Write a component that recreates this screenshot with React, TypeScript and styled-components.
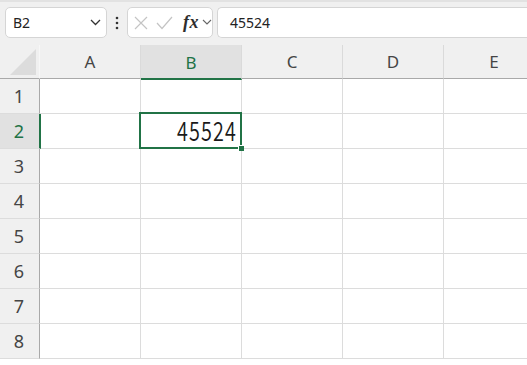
import React from "react";
import styled, { createGlobalStyle } from "styled-components";

const Global = createGlobalStyle`
  html, body { margin: 0; padding: 0; background: #ffffff; overflow: hidden; }
  body { width: 527px; height: 365px; font-family: "Noto Sans", "Open Sans", sans-serif; }
`;

const GREEN = "#217346";

const Page = styled.div`
  width: 527px;
  height: 365px;
  overflow: hidden;
  display: flex;
  flex-direction: column;
`;

const Toolbar = styled.div`
  flex: none;
  height: 45px;
  box-sizing: border-box;
  background: #f0f0f0;
  border-top: 2px solid #e2e2e2;
  display: flex;
  align-items: flex-start;
  padding: 5px 0 0 5px;
  white-space: nowrap;
  overflow: hidden;
`;

const Box = styled.div<{ $w?: number }>`
  box-sizing: border-box;
  height: 31px;
  width: ${(p) => p.$w ?? 330}px;
  flex: none;
  background: #ffffff;
  border: 1px solid #d5d5d5;
  border-radius: 5px;
  display: flex;
  align-items: center;
`;

const NameBox = styled(Box)`
  padding: 0 5px 0 7px;
  justify-content: space-between;
  font-size: 14px;
  color: #222;
`;

const FormulaInput = styled(Box)`
  padding-left: 12px;
  font-size: 14px;
  color: #222;
  border-right: none;
  border-radius: 5px 0 0 5px;
`;

const Dots = styled.div`
  flex: none;
  width: 20px;
  height: 31px;
  display: flex;
  align-items: center;
  justify-content: center;
`;

const FxGroup = styled(Box)`
  padding-left: 6px;
  margin-right: 4px;
`;

const Fx = styled.span`
  font-family: "Liberation Serif", serif;
  font-style: italic;
  font-weight: 600;
  font-size: 18px;
  color: #2e2e2e;
  margin-left: 10px;
  letter-spacing: 0.5px;
`;

const Sheet = styled.div`
  flex: 1;
  display: grid;
  grid-template-columns: 40px repeat(5, 101px);
  grid-template-rows: 34px repeat(8, 35px);
  background: #ffffff;
`;

const Corner = styled.div`
  background: #f0f0f0;
  border-right: 1px solid #f7f7f7;
  border-bottom: 1px solid #a9a9a9;
  box-sizing: border-box;
  position: relative;
  &::after {
    content: "";
    position: absolute;
    left: 10px;
    top: 4px;
    width: 26px;
    height: 26px;
    background: #dcdcdc;
    clip-path: polygon(100% 0, 100% 100%, 0 100%);
  }
`;

const ColHead = styled.div<{ $sel?: boolean }>`
  box-sizing: border-box;
  background: ${(p) => (p.$sel ? "#e1e1e1" : "#f0f0f0")};
  border-right: 1px solid #dadada;
  border-bottom: ${(p) => (p.$sel ? `2px solid ${GREEN}` : "1px solid #a9a9a9")};
  margin-bottom: ${(p) => (p.$sel ? "-1px" : "0")};
  display: flex;
  align-items: center;
  justify-content: center;
  padding-top: ${(p) => (p.$sel ? "1px" : "0")};
  font-size: 17px;
  color: ${(p) => (p.$sel ? GREEN : "#454545")};
  position: relative;
  z-index: 1;
`;

const RowHead = styled.div<{ $sel?: boolean }>`
  box-sizing: border-box;
  background: ${(p) => (p.$sel ? "#e1e1e1" : "#f0f0f0")};
  border-right: ${(p) => (p.$sel ? `2px solid ${GREEN}` : "1px solid #a9a9a9")};
  margin-right: ${(p) => (p.$sel ? "-1px" : "0")};
  border-bottom: 1px solid #dcdcdc;
  display: flex;
  align-items: center;
  justify-content: center;
  padding-right: 1px;
  font-size: 18px;
  color: ${(p) => (p.$sel ? GREEN : "#454545")};
  position: relative;
  z-index: 1;
`;

const Cell = styled.div<{ $active?: boolean }>`
  box-sizing: border-box;
  border-right: 1px solid #dcdcdc;
  border-bottom: 1px solid #dcdcdc;
  position: relative;
  display: flex;
  align-items: flex-end;
  justify-content: flex-end;
  padding: 0 4px 5px 0;
  ${(p) =>
    p.$active &&
    `
    &::before {
      content: "";
      position: absolute;
      left: -2px;
      top: -2px;
      right: -1px;
      bottom: -1px;
      border: 2px solid ${GREEN};
      z-index: 2;
    }
  `}
`;

const Handle = styled.span`
  position: absolute;
  right: -3px;
  bottom: -3px;
  width: 5px;
  height: 5px;
  background: ${GREEN};
  border: 1px solid #ffffff;
  border-width: 1px 0 0 1px;
  z-index: 3;
`;

const Value = styled.span`
  display: inline-block;
  font-family: "Noto Sans CJK JP", "Noto Sans", sans-serif;
  font-weight: 350;
  font-size: 26px;
  line-height: 26px;
  color: #1a1a1a;
  transform: scaleX(0.76);
  transform-origin: right bottom;
  letter-spacing: 1.5px;
`;

const Chevron = () => (
  <svg width="11" height="7" viewBox="0 0 11 7">
    <polyline points="1,1 5.5,5.5 10,1" fill="none" stroke="#333" strokeWidth="1.3" />
  </svg>
);

const cols = ["A", "B", "C", "D", "E"];
const rows = [1, 2, 3, 4, 5, 6, 7, 8];

export default function App() {
  return (
    <Page>
      <Global />
      <Toolbar>
        <NameBox $w={102}>
          <span>B2</span>
          <Chevron />
        </NameBox>
        <Dots>
          <svg width="4" height="14" viewBox="0 0 4 14">
            <circle cx="2" cy="2" r="1.3" fill="#333" />
            <circle cx="2" cy="7" r="1.3" fill="#333" />
            <circle cx="2" cy="12" r="1.3" fill="#333" />
          </svg>
        </Dots>
        <FxGroup $w={86}>
          <svg width="14" height="14" viewBox="0 0 14 14">
            <path d="M1 1 L13 13 M13 1 L1 13" stroke="#c4c4c4" strokeWidth="1.2" fill="none" />
          </svg>
          <svg width="17" height="14" viewBox="0 0 17 14" style={{ marginLeft: 8 }}>
            <polyline points="1,7 6,12.5 16,1" stroke="#c4c4c4" strokeWidth="1.2" fill="none" />
          </svg>
          <Fx>fx</Fx>
          <span style={{ marginLeft: 3, display: "flex" }}>
            <svg width="10" height="7" viewBox="0 0 10 7">
              <polyline points="1,1 5,5 9,1" fill="none" stroke="#666" strokeWidth="1.1" />
            </svg>
          </span>
        </FxGroup>
        <FormulaInput $w={330}>45524</FormulaInput>
      </Toolbar>
      <Sheet>
        <Corner />
        {cols.map((c) => (
          <ColHead key={c} $sel={c === "B"}>
            {c}
          </ColHead>
        ))}
        {rows.map((r) => (
          <React.Fragment key={r}>
            <RowHead $sel={r === 2}>{r}</RowHead>
            {cols.map((c) => {
              const active = r === 2 && c === "B";
              return (
                <Cell key={c} $active={active}>
                  {active && (
                    <>
                      <Value>45524</Value>
                      <Handle />
                    </>
                  )}
                </Cell>
              );
            })}
          </React.Fragment>
        ))}
      </Sheet>
    </Page>
  );
}
